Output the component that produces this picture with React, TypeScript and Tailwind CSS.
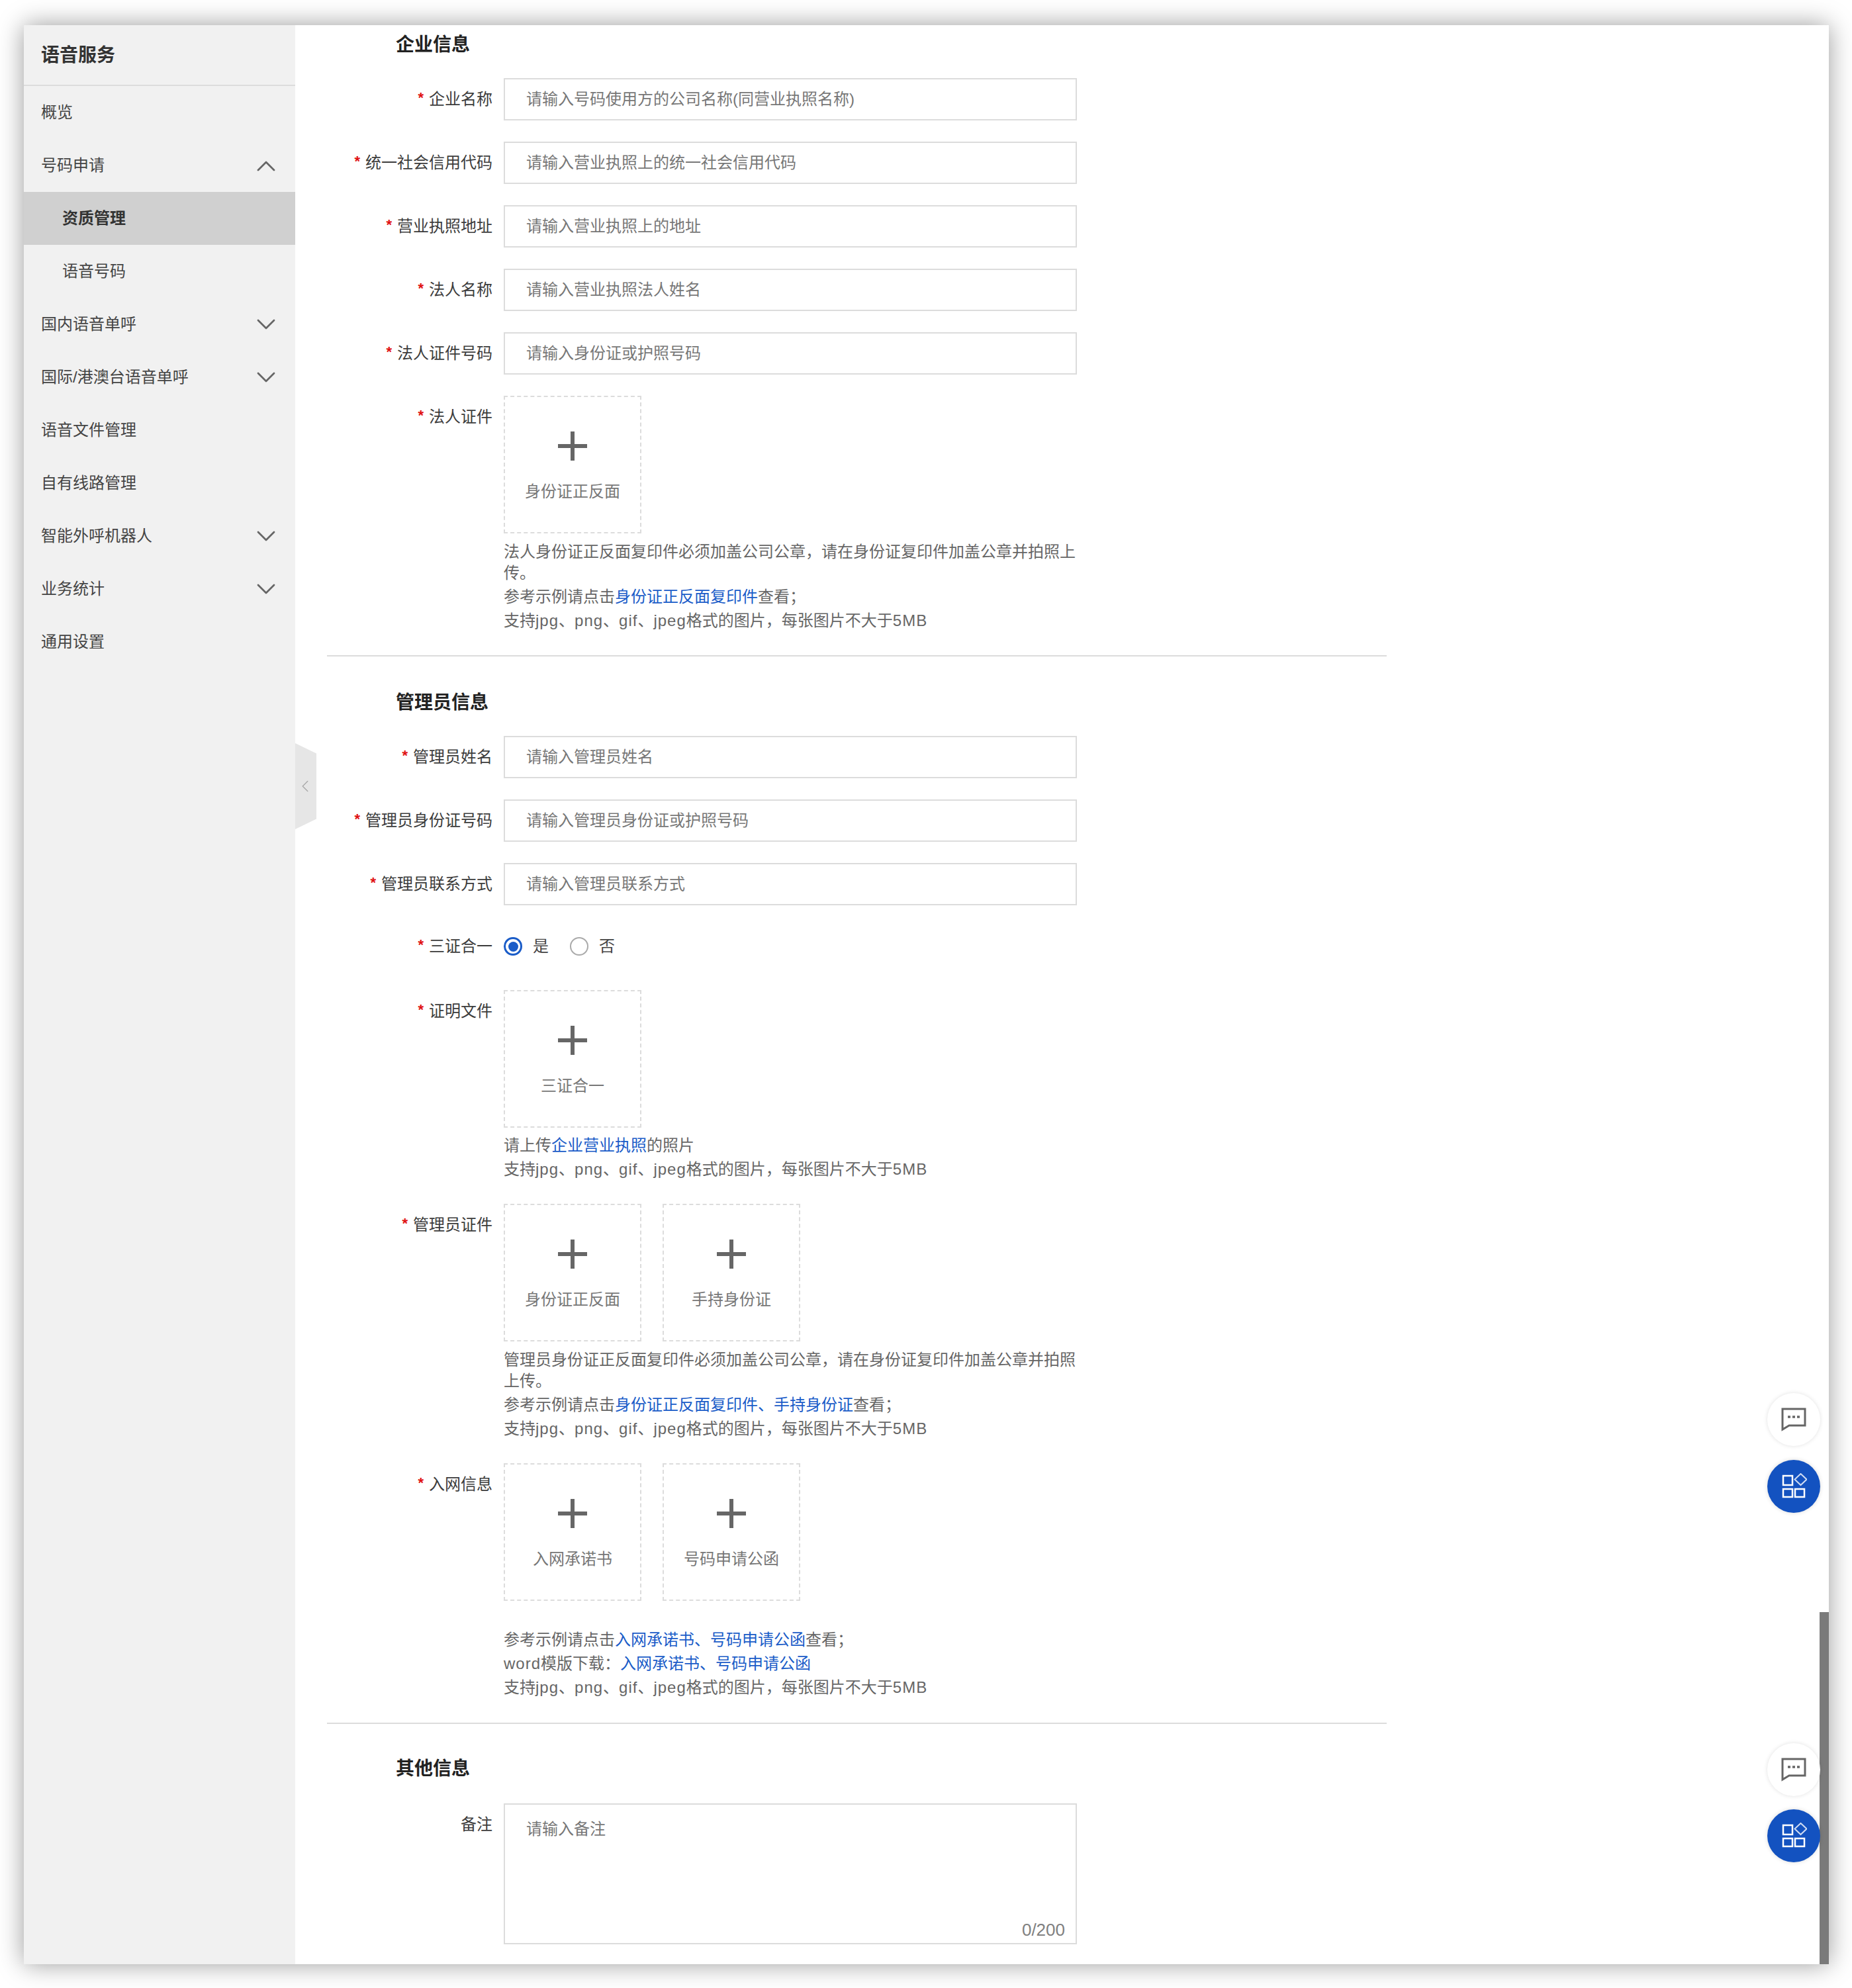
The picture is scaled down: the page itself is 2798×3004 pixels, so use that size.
import React from 'react';
import { ChevronDown, ChevronLeft, ChevronUp } from 'lucide-react';

interface NavItem {
  label: string;
  sub?: boolean;
  active?: boolean;
  arrow?: 'up' | 'down';
}

const navItems: NavItem[] = [
  { label: '概览' },
  { label: '号码申请', arrow: 'up' },
  { label: '资质管理', sub: true, active: true },
  { label: '语音号码', sub: true },
  { label: '国内语音单呼', arrow: 'down' },
  { label: '国际/港澳台语音单呼', arrow: 'down' },
  { label: '语音文件管理' },
  { label: '自有线路管理' },
  { label: '智能外呼机器人', arrow: 'down' },
  { label: '业务统计', arrow: 'down' },
  { label: '通用设置' }
];

const Sidebar = () => (
  <aside className="w-[410px] shrink-0 bg-[#f1f1f1] text-[24px] text-[#444]">
    <div className="h-[92px] flex items-center pl-[26px] border-b-2 border-[#dcdcdc] text-[28px] font-bold text-[#333] pt-[2px]">
      语音服务
    </div>
    {navItems.map((item) => (
      <div
        key={item.label}
        className={`h-[80px] flex items-center justify-between pr-[20px] ${item.sub ? 'pl-[58px]' : 'pl-[26px]'} ${item.active ? 'bg-[#d0d0d0] font-bold text-[#333]' : ''}`}
      >
        <span>{item.label}</span>
        {item.arrow === 'up' && <ChevronUp size={48} strokeWidth={1.4} className="text-[#666] mt-[2px]" />}
        {item.arrow === 'down' && <ChevronDown size={48} strokeWidth={1.4} className="text-[#666]" />}
      </div>
    ))}
  </aside>
);

const FieldLabel = ({ text, required = true }: { text: string; required?: boolean }) => (
  <div className="w-[250px] shrink-0 h-[64px] flex items-center justify-end text-[#3c3c3c]">
    {required && <span className="text-[#e01010] mr-[8px] -mt-[6px] text-[22px] font-bold">*</span>}
    {text}
  </div>
);

const TextField = ({ label, placeholder }: { label: string; placeholder: string }) => (
  <div className="flex gap-[17px] mb-[32px]">
    <FieldLabel text={label} />
    <input
      readOnly
      placeholder={placeholder}
      className="w-[866px] h-[64px] border-2 border-[#dcdcdc] px-[32px] text-[24px] outline-none placeholder:text-[#777]"
    />
  </div>
);

const PlusIcon = () => (
  <svg width="44" height="44" viewBox="0 0 44 44" className="text-[#666]">
    <path d="M22 0v44M0 22h44" stroke="currentColor" strokeWidth="6" fill="none" />
  </svg>
);

const UploadBox = ({ text }: { text: string }) => (
  <div className="w-[208px] h-[208px] border-2 border-dashed border-[#dcdcdc] flex flex-col items-center pt-[52px] text-[#777]">
    <PlusIcon />
    <span className="mt-[31px] leading-[32px]">{text}</span>
  </div>
);

const Hint = ({ children, className = '' }: { children: React.ReactNode; className?: string }) => (
  <p className={`leading-[32px] mt-[4px] text-[#666] ${className}`}>{children}</p>
);

const Latin = ({ children }: { children: React.ReactNode }) => (
  <span className="tracking-[1px]">{children}</span>
);

const FormatHint = () => (
  <Hint>
    支持<Latin>jpg</Latin>、<Latin>png</Latin>、<Latin>gif</Latin>、<Latin>jpeg</Latin>格式的图片，每张图片不大于<Latin>5MB</Latin>
  </Hint>
);

const Link = ({ children }: { children: React.ReactNode }) => (
  <span className="text-[#1a5cc8]">{children}</span>
);

const UploadField = ({
  label,
  boxes,
  children,
  className = ''
}: {
  label: string;
  boxes: string[];
  children: React.ReactNode;
  className?: string;
}) => (
  <div className={`flex gap-[17px] ${className}`}>
    <FieldLabel text={label} />
    <div className="w-[866px]">
      <div className="flex gap-[32px]">
        {boxes.map((b) => (
          <UploadBox key={b} text={b} />
        ))}
      </div>
      {children}
    </div>
  </div>
);

const SectionTitle = ({ children, className = '' }: { children: React.ReactNode; className?: string }) => (
  <h2 className={`ml-[104px] h-[40px] leading-[40px] text-[28px] font-bold text-[#222] ${className}`}>{children}</h2>
);

const Radio = ({ label, checked }: { label: string; checked?: boolean }) => (
  <div className="flex items-center gap-[16px] text-[#444]">
    <span
      className={`w-[28px] h-[28px] rounded-full flex items-center justify-center ${checked ? 'border-[3px] border-[#1a5cc8]' : 'border-2 border-[#aaa]'}`}
    >
      {checked && <span className="w-[15px] h-[15px] rounded-full bg-[#1a5cc8]" />}
    </span>
    {label}
  </div>
);

const ChatButton = ({ className }: { className: string }) => (
  <div className={`absolute right-[13px] w-[80px] h-[80px] rounded-full bg-white shadow-[0_0_6px_rgba(0,0,0,0.12)] flex items-center justify-center ${className}`}>
    <svg width="38" height="36" viewBox="0 0 38 36" fill="none" className="text-[#666]">
      <path d="M2 2h34v25H12L2 33z" stroke="currentColor" strokeWidth="3" />
      <path d="M10 14h4M17 14h4M24 14h4" stroke="currentColor" strokeWidth="3.5" />
    </svg>
  </div>
);

const AppsButton = ({ className }: { className: string }) => (
  <div className={`absolute right-[13px] w-[80px] h-[80px] rounded-full bg-[#1352c0] shadow-[0_0_6px_rgba(0,0,0,0.15)] flex items-center justify-center ${className}`}>
    <svg width="40" height="40" viewBox="0 0 40 40" fill="none" stroke="white" strokeWidth="2.5">
      <rect x="4" y="4" width="14" height="14" />
      <rect x="4" y="24" width="14" height="12" />
      <rect x="22" y="24" width="14" height="12" />
      <path d="M30.5 1l9 8.5-9 8.5-9-8.5z" opacity="0.8" strokeWidth="2" />
    </svg>
  </div>
);

const App = () => (
  <div className="w-[2798px] h-[3004px] bg-white pt-[38px] pl-[36px] font-['Liberation_Sans','Noto_Sans_CJK_SC',sans-serif] text-[24px] overflow-hidden">
    <div className="relative w-[2727px] h-[2930px] bg-white flex overflow-hidden shadow-[0_0_36px_rgba(0,0,0,0.4)]">
      <Sidebar />

      <main className="flex-1 pl-[48px]">
        <div className="w-[1601px]">
          <SectionTitle className="mt-[10px] mb-[30px]">企业信息</SectionTitle>
          <TextField label="企业名称" placeholder="请输入号码使用方的公司名称(同营业执照名称)" />
          <TextField label="统一社会信用代码" placeholder="请输入营业执照上的统一社会信用代码" />
          <TextField label="营业执照地址" placeholder="请输入营业执照上的地址" />
          <TextField label="法人名称" placeholder="请输入营业执照法人姓名" />
          <TextField label="法人证件号码" placeholder="请输入身份证或护照号码" />
          <UploadField label="法人证件" boxes={['身份证正反面']}>
            <Hint className="mt-[12px]">法人身份证正反面复印件必须加盖公司公章，请在身份证复印件加盖公章并拍照上传。</Hint>
            <Hint>参考示例请点击<Link>身份证正反面复印件</Link>查看；</Hint>
            <FormatHint />
          </UploadField>
          <div className="h-[2px] bg-[#dcdcdc] mt-[36px] mb-[50px]" />

          <SectionTitle className="mb-[30px]">管理员信息</SectionTitle>
          <TextField label="管理员姓名" placeholder="请输入管理员姓名" />
          <TextField label="管理员身份证号码" placeholder="请输入管理员身份证或护照号码" />
          <TextField label="管理员联系方式" placeholder="请输入管理员联系方式" />
          <div className="flex gap-[17px] h-[60px] items-center mb-[36px]">
            <FieldLabel text="三证合一" />
            <div className="flex gap-[32px]">
              <Radio label="是" checked />
              <Radio label="否" />
            </div>
          </div>
          <UploadField label="证明文件" boxes={['三证合一']} className="mb-[36px]">
            <Hint className="mt-[11px]">请上传<Link>企业营业执照</Link>的照片</Hint>
            <FormatHint />
          </UploadField>
          <UploadField label="管理员证件" boxes={['身份证正反面', '手持身份证']} className="mb-[36px]">
            <Hint className="mt-[12px]">管理员身份证正反面复印件必须加盖公司公章，请在身份证复印件加盖公章并拍照上传。</Hint>
            <Hint>参考示例请点击<Link>身份证正反面复印件、手持身份证</Link>查看；</Hint>
            <FormatHint />
          </UploadField>
          <UploadField label="入网信息" boxes={['入网承诺书', '号码申请公函']}>
            <Hint className="mt-[43px]">参考示例请点击<Link>入网承诺书、号码申请公函</Link>查看；</Hint>
            <Hint><Latin>word</Latin>模版下载：<Link>入网承诺书、号码申请公函</Link></Hint>
            <FormatHint />
          </UploadField>
          <div className="h-[2px] bg-[#dcdcdc] mt-[37px] mb-[48px]" />

          <SectionTitle className="mb-[32px]">其他信息</SectionTitle>
          <div className="flex gap-[17px]">
            <FieldLabel text="备注" required={false} />
            <div className="relative w-[866px] h-[213px]">
              <textarea
                readOnly
                placeholder="请输入备注"
                className="block w-full h-full border-2 border-[#dcdcdc] px-[32px] pt-[19px] text-[24px] outline-none resize-none placeholder:text-[#777]"
              />
              <span className="absolute right-[18px] bottom-[2px] text-[26px] text-[#808080]">0/200</span>
            </div>
          </div>
        </div>
      </main>

      {/* sidebar collapse handle */}
      <div className="absolute left-[410px] top-[1085px] w-[32px] h-[130px] bg-[#e6e6e6] [clip-path:polygon(0_0,100%_12%,100%_88%,0_100%)] flex items-center justify-center text-[#aaa] pr-[2px]">
        <ChevronLeft size={44} strokeWidth={1.2} />
      </div>

      <div className="absolute right-0 top-[2398px] bottom-0 w-[14px] bg-[#7a7a7a]" />

      <ChatButton className="top-[2067px]" />
      <AppsButton className="top-[2168px]" />
      <ChatButton className="top-[2596px]" />
      <AppsButton className="top-[2696px]" />
    </div>
  </div>
);

export default App;
